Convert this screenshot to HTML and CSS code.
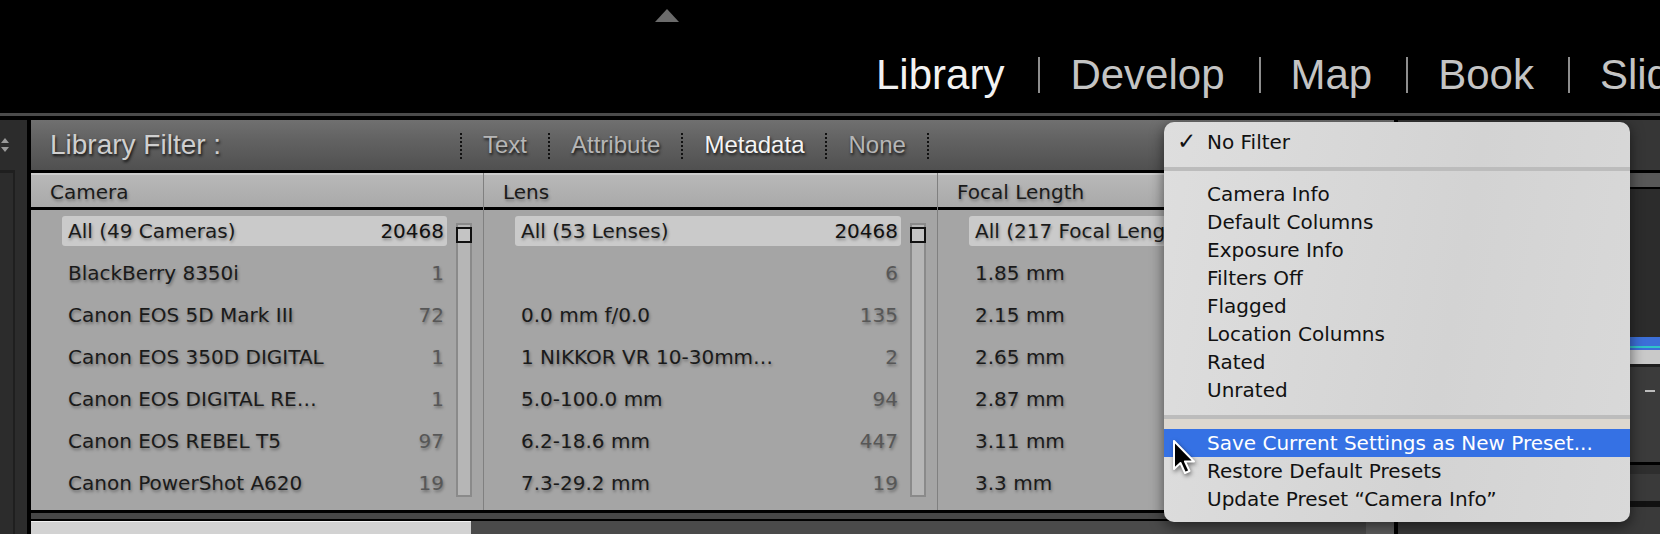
FILE: index.html
```html
<!DOCTYPE html>
<html lang="en">
<head>
    <meta charset="UTF-8">
    <title>Library Filter</title>
    <link rel="stylesheet" href="styles.css">
</head>
<body>
    <div class="topbar">
        <div class="panel-toggle"></div>
        <nav class="modules">
            <span class="module active">Library</span>
            <span class="module-sep"></span>
            <span class="module">Develop</span>
            <span class="module-sep"></span>
            <span class="module">Map</span>
            <span class="module-sep"></span>
            <span class="module">Book</span>
            <span class="module-sep"></span>
            <span class="module">Slideshow</span>
        </nav>
    </div>

    <div class="workspace">
        <div class="left-strip">
            <div class="left-head">
                <svg width="10" height="16" viewBox="0 0 10 16"><path d="M1 6 L5 1 L9 6 Z M1 10 L5 15 L9 10 Z" fill="#9a9a9a"/></svg>
            </div>
            <div class="left-body"></div>
        </div>

        <div class="center">
            <div class="filter-bar">
                <span class="filter-title">Library Filter :</span>
                <span class="dots"></span>
                <span class="mode">Text</span>
                <span class="dots"></span>
                <span class="mode">Attribute</span>
                <span class="dots"></span>
                <span class="mode active">Metadata</span>
                <span class="dots"></span>
                <span class="mode">None</span>
                <span class="dots"></span>
            </div>

            <div class="browser">
                <div class="column">
                    <div class="column-head">Camera</div>
                    <div class="column-body">
                        <ul class="items">
                            <li class="row sel"><span>All (49 Cameras)</span><b>20468</b></li>
                            <li class="row"><span>BlackBerry 8350i</span><b>1</b></li>
                            <li class="row"><span>Canon EOS 5D Mark III</span><b>72</b></li>
                            <li class="row"><span>Canon EOS 350D DIGITAL</span><b>1</b></li>
                            <li class="row"><span>Canon EOS DIGITAL RE…</span><b>1</b></li>
                            <li class="row"><span>Canon EOS REBEL T5</span><b>97</b></li>
                            <li class="row"><span>Canon PowerShot A620</span><b>19</b></li>
                        </ul>
                        <div class="scroll"><div class="thumb"></div></div>
                    </div>
                </div>
                <div class="column">
                    <div class="column-head">Lens</div>
                    <div class="column-body">
                        <ul class="items">
                            <li class="row sel"><span>All (53 Lenses)</span><b>20468</b></li>
                            <li class="row"><span></span><b>6</b></li>
                            <li class="row"><span>0.0 mm f/0.0</span><b>135</b></li>
                            <li class="row"><span>1 NIKKOR VR 10-30mm…</span><b>2</b></li>
                            <li class="row"><span>5.0-100.0 mm</span><b>94</b></li>
                            <li class="row"><span>6.2-18.6 mm</span><b>447</b></li>
                            <li class="row"><span>7.3-29.2 mm</span><b>19</b></li>
                        </ul>
                        <div class="scroll"><div class="thumb"></div></div>
                    </div>
                </div>
                <div class="column">
                    <div class="column-head">Focal Length</div>
                    <div class="column-body">
                        <ul class="items">
                            <li class="row sel"><span>All (217 Focal Leng</span></li>
                            <li class="row"><span>1.85 mm</span></li>
                            <li class="row"><span>2.15 mm</span></li>
                            <li class="row"><span>2.65 mm</span></li>
                            <li class="row"><span>2.87 mm</span></li>
                            <li class="row"><span>3.11 mm</span></li>
                            <li class="row"><span>3.3 mm</span></li>
                        </ul>
                        <div class="scroll"><div class="thumb"></div></div>
                    </div>
                </div>
            </div>

            <div class="bottom-strip">
                <div class="bottom-light"></div>
                <div class="bottom-mid"></div>
                <div class="bottom-knob"></div>
            </div>
        </div>

        <div class="right-panel">
            <div class="rp-head"></div>
            <div class="rp-tab"></div>
            <div class="rp-histo"><div class="histo-fill"></div></div>
            <div class="rp-light"></div>
            <div class="rp-block"><span class="rp-dash"></span></div>
            <div class="rp-line"></div>
            <div class="rp-block2"></div>
            <div class="rp-foot"></div>
        </div>
    </div>

    <div class="preset-menu">
        <div class="menu-item"><span class="check">✓</span>No Filter</div>
        <div class="menu-sep first"></div>
        <div class="menu-item">Camera Info</div>
        <div class="menu-item">Default Columns</div>
        <div class="menu-item">Exposure Info</div>
        <div class="menu-item">Filters Off</div>
        <div class="menu-item">Flagged</div>
        <div class="menu-item">Location Columns</div>
        <div class="menu-item">Rated</div>
        <div class="menu-item">Unrated</div>
        <div class="menu-sep second"></div>
        <div class="menu-item hover">Save Current Settings as New Preset...</div>
        <div class="menu-item">Restore Default Presets</div>
        <div class="menu-item">Update Preset “Camera Info”</div>
    </div>

    <svg class="cursor" width="26" height="38" viewBox="0 0 26 38">
        <path d="M2 2 L2 30 L8.5 24 L13 34 L17.5 32 L13 22.5 L22 22.5 Z" fill="#000" stroke="#fff" stroke-width="2" stroke-linejoin="round"/>
    </svg>
</body>
</html>
```

FILE: styles.css
```css
*{
    margin: 0;
    padding: 0;
    box-sizing: border-box;
}
body{
    width: 1660px;
    height: 534px;
    overflow: hidden;
    background-color: #000;
    position: relative;
    font-family: "DejaVu Sans", sans-serif;
}

/* module picker */
.topbar{
    height: 116px;
    border-bottom: 3px solid #4b4b4b;
    margin-bottom: 4px;
    overflow: hidden;
}
.panel-toggle{
    width: 0;
    height: 0;
    border-left: 12px solid transparent;
    border-right: 12px solid transparent;
    border-bottom: 13px solid #6b6b6b;
    margin: 9px 0 0 655px;
}
.modules{
    display: flex;
    align-items: center;
    margin-top: 32px;
    padding-left: 876px;
    height: 42px;
    white-space: nowrap;
    font-family: "Liberation Sans", Arial, sans-serif;
    font-size: 42px;
    line-height: 42px;
    color: #c4c4c4;
}
.module.active{
    color: #f2f2f2;
}
.module-sep{
    flex: none;
    width: 2px;
    height: 36px;
    background-color: #8e8e8e;
    margin: 0 30px 0 34px;
}

.workspace{
    display: flex;
    height: 414px;
}

/* left strip */
.left-strip{
    width: 27px;
    margin-right: 4px;
    background-color: #2c2c2c;
    display: flex;
    flex-direction: column;
}
.left-head{
    height: 50px;
    padding-top: 17px;
}
.left-head svg{
    display: block;
}
.left-body{
    flex: 1;
    border-top: 3px solid #1f1f1f;
    border-right: 2px solid #1f1f1f;
    margin-right: 12px;
}

/* center */
.center{
    width: 1363px;
    display: flex;
    flex-direction: column;
}
.filter-bar{
    height: 50px;
    display: flex;
    align-items: center;
    background: linear-gradient(#707070, #626262 40%, #505050);
    padding-left: 19px;
    font-family: "Liberation Sans", Arial, sans-serif;
}
.filter-title{
    width: 410px;
    font-size: 28px;
    color: #cfcfcf;
    text-shadow: 1px 2px 3px rgba(0,0,0,0.85);
}
.mode{
    font-size: 24px;
    color: #b6b6b6;
    margin: 0 21px;
    text-shadow: 1px 2px 3px rgba(0,0,0,0.8);
}
.mode.active{
    color: #f4f4f4;
}
.dots{
    width: 2px;
    height: 27px;
    margin-top: 3px;
    background: repeating-linear-gradient(#111 0 2px, transparent 2px 4px);
}

.browser{
    display: flex;
    height: 343px;
    border-top: 3px solid #000;
    border-bottom: 3px solid #000;
}
.column{
    width: 453px;
    border-right: 1px solid #808080;
    display: flex;
    flex-direction: column;
}
.column:nth-child(2){
    width: 454px;
}
.column:last-child{
    flex: 1;
    border-right: none;
}
.column-head{
    height: 37px;
    border-top: 2px solid #cdcdcd;
    border-bottom: 3px solid #000;
    background: linear-gradient(#b8b8b8, #a9a9a9);
    padding: 3px 0 0 19px;
    font-size: 20px;
    line-height: 29px;
    color: #1a1a1a;
    text-shadow: 1px 2px 3px rgba(0,0,0,0.3);
}
.column-body{
    flex: 1;
    display: flex;
    padding: 6px 11px 0 31px;
    background-color: #a5a5a5;
}
.items{
    flex: 1;
    list-style: none;
    min-width: 0;
}
.row{
    display: flex;
    justify-content: space-between;
    height: 30px;
    margin-bottom: 12px;
    padding: 0 3px 0 6px;
    font-size: 20px;
    line-height: 30px;
    color: #1a1a1a;
    white-space: nowrap;
    text-shadow: 1px 2px 3px rgba(0,0,0,0.35);
}
.row b{
    font-weight: normal;
    color: #575757;
}
.row.sel{
    background-color: #cacaca;
    border-radius: 3px;
}
.row.sel b{
    color: #111;
}
.scroll{
    flex: none;
    width: 16px;
    height: 274px;
    margin: 7px 0 0 9px;
    border: 2px solid #8a8a8a;
    background-color: #b6b6b6;
}
.thumb{
    width: 16px;
    height: 16px;
    margin: 2px 0 0 -2px;
    border: 2px solid #111;
    background-color: #c4c4c4;
}

.bottom-strip{
    flex: 1;
    display: flex;
    border-top: 6px solid #474747;
    padding-top: 2px;
}
.bottom-light{
    width: 440px;
    background: linear-gradient(#f0f0f0 0 1px, #d2d2d2 1px);
}
.bottom-mid{
    flex: 1;
    background-color: #4a4a4a;
}
.bottom-knob{
    width: 28px;
    background-color: #5c5c5c;
}

/* right panel (mostly under the menu) */
.right-panel{
    flex: 1;
    margin-left: 4px;
    display: flex;
    flex-direction: column;
}
.rp-head{
    height: 53px;
    background-color: #363636;
    border-bottom: 3px solid #000;
}
.rp-tab{
    height: 16px;
    background-color: #585858;
    border-bottom: 2px solid #000;
}
.rp-histo{
    height: 161px;
    background-color: #2c2c2c;
    display: flex;
    align-items: flex-end;
}
.histo-fill{
    width: 100%;
    height: 13px;
    background: linear-gradient(#3c6fd8 0 9px, #2fc4c8 9px 11px, #3c6fd8 11px);
}
.rp-light{
    height: 17px;
    background-color: #c9c9c9;
    border-bottom: 3px solid #1e1e1e;
}
.rp-block{
    height: 95px;
    background-color: #3b3b3b;
    display: flex;
    justify-content: flex-end;
    padding: 23px 5px 0 0;
}
.rp-dash{
    width: 10px;
    height: 2px;
    background-color: #bdbdbd;
}
.rp-line{
    height: 12px;
    background-color: #2e2e2e;
    border-top: 3px solid #000;
}
.rp-block2{
    height: 33px;
    background-color: #3a3a3a;
    border-bottom: 6px solid #111;
}
.rp-foot{
    flex: 1;
    background-color: #3a3a3a;
}

/* preset menu */
.preset-menu{
    position: absolute;
    left: 1164px;
    top: 122px;
    width: 466px;
    height: 400px;
    padding: 5px 0 10px;
    border-radius: 10px;
    background: linear-gradient(100deg, #dedede, #d3d3d3 60%, #d9d9d9);
    box-shadow: 0 4px 14px rgba(0,0,0,0.55);
    font-size: 20px;
    line-height: 28px;
    color: #111;
    overflow: hidden;
}
.menu-item{
    height: 28px;
    padding-left: 43px;
    white-space: nowrap;
}
.menu-item .check{
    display: inline-block;
    width: 30px;
    margin-left: -30px;
    font-size: 23px;
    font-weight: bold;
}
.menu-item.hover{
    background-color: #3571e4;
    color: #fff;
}
.menu-sep{
    height: 4px;
    background-color: #bcbcbc;
}
.menu-sep.first{
    margin: 12px 0 9px;
}
.menu-sep.second{
    margin: 11px 0 0;
    border-bottom: 10px solid #dcd7cf;
    height: 14px;
    background-clip: padding-box;
}

.cursor{
    position: absolute;
    left: 1172px;
    top: 439px;
    filter: drop-shadow(1px 2px 2px rgba(0,0,0,0.5));
}
```
